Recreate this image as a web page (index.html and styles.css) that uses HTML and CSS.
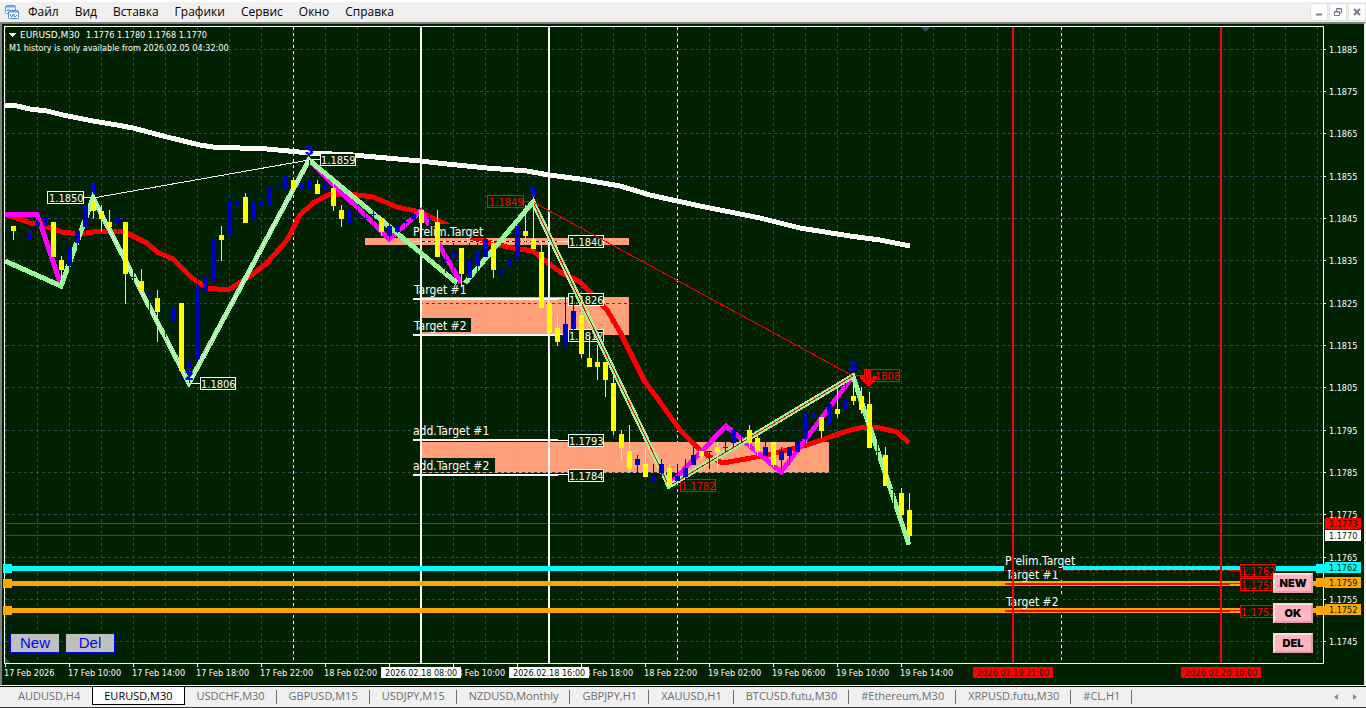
FILE: index.html
```html
<!DOCTYPE html>
<html lang="ru">
<head>
<meta charset="utf-8">
<title>EURUSD,M30</title>
<link rel="stylesheet" href="styles.css">
</head>
<body>
<header class="menubar">
  <svg class="app-icon" viewBox="0 0 14 14" aria-hidden="true">
    <rect x="0.5" y="0.5" width="10" height="8" rx="1" fill="#eaf4ff" stroke="#6ba4e0"/>
    <path d="M1 1.500H10" stroke="#6ba4e0" stroke-width="2"/>
    <path d="M2 6L3.500 4L5 6" fill="none" stroke="#4b8fd8"/>
    <rect x="3.500" y="5.500" width="10" height="8" rx="1" fill="#fff" stroke="#4b8fd8"/>
    <path d="M4 6.500H13" stroke="#6ba4e0" stroke-width="2"/>
    <path d="M5 9L6.500 12L8.500 9L10 12L12 10" fill="none" stroke="#2f78cc"/>
  </svg>
  <nav class="menu">
    <button type="button">Файл</button>
    <button type="button">Вид</button>
    <button type="button">Вставка</button>
    <button type="button">Графики</button>
    <button type="button">Сервис</button>
    <button type="button">Окно</button>
    <button type="button">Справка</button>
  </nav>
  <div class="window-controls">
    <button type="button" aria-label="Свернуть"><svg viewBox="0 0 10 10"><path d="M2 7.500H8" stroke-width="2"/></svg></button>
    <button type="button" aria-label="Восстановить"><svg viewBox="0 0 10 10"><path d="M3.500 4V1.500H8.500V6H7M3 2H9M1.500 4.500H6.500V8.500H1.500ZM1 5H7"/></svg></button>
    <button type="button" aria-label="Закрыть"><svg viewBox="0 0 10 10"><path d="M2 2L8 8M8 2L2 8" stroke-width="2"/></svg></button>
  </div>
</header>

<main class="workspace">
<svg class="chart" viewBox="2 24 1362 661" role="img" aria-label="EURUSD,M30">
  <defs>
    <pattern id="vgrid" x="37" y="27" width="32" height="6" patternUnits="userSpaceOnUse"><rect width="1" height="3" fill="#2f4f4f"/></pattern>
    <pattern id="vgrid-zone" x="37" y="27" width="32" height="6" patternUnits="userSpaceOnUse"><rect width="1" height="3" fill="#d0b050"/></pattern>
  </defs>
  <rect x="5" y="27" width="1318" height="636" fill="url(#vgrid)"/>
  <path class="day" d="M293.500 27V663M677.500 27V663M1061.500 27V663"/>

  <g class="zones">
    <rect x="365" y="238" width="264" height="7"/>
    <rect x="422" y="297" width="207" height="38"/>
    <rect x="422" y="442" width="407" height="31"/>
  </g>
  <g fill="url(#vgrid-zone)">
    <rect x="422" y="297" width="207" height="38"/>
    <rect x="422" y="442" width="407" height="31"/>
  </g>
  <path class="hgrid" d="M6 49.500H1323M6 91.500H1323M6 133.500H1323M6 176.500H1323M6 218.500H1323M6 260.500H1323M6 303.500H1323M6 345.500H1323M6 387.500H1323M6 430.500H1323M6 472.500H1323M6 514.500H1323M6 557.500H1323M6 599.500H1323M6 641.500H1323"/>
  <path class="line1 slate" d="M5 535.500H1323"/>
  <path class="line1 red" d="M5 523.500H1323"/>
  <path fill="#2f4f4f" d="M920 27H931L925.500 32ZM5 658V663H10Z"/>

  <path class="ma white" d="M5 105L17 106L30 109L47 111L63 115L93 121L117 125L133 128L167 137L200 145L213 147L267 149L310 153L353 155L420 161L447 164L487 168L527 171L549 175L580 179L620 186L650 195L700 206L760 218L800 228L850 236L880 240L910 246"/>
  <path class="ma red" d="M5 214L30 223L37 223L45 226L62 232L80 234L100 231L117 231L127 233L147 243L157 252L173 259L192 278L207 288L217 289L230 289L253 274L267 263L287 240L300 215L313 203L328 195L350 194L373 197L397 207L420 212L430 217L443 223L473 238L507 247L533 251L547 262L560 272L580 282L607 310L620 332L633 358L645 382L660 402L680 430L700 450L710 457L723 463L740 460L767 455L807 445L827 438L847 431L863 427L880 428L897 432L909 443"/>

  <path class="line2 white" d="M549 27V663"/>
  <path class="level cyan" d="M5 568.500H1323"/>
  <path class="level orange" d="M5 583.500H1323M5 610.500H1323"/>
  <g class="cyan-fill"><rect x="1316" y="564" width="10" height="9"/></g>
  <g class="orange-fill"><rect x="1316" y="578" width="10" height="9"/><rect x="1316" y="606" width="10" height="9"/></g>

  <g class="bg">
    <rect x="413" y="224" width="73" height="14"/><rect x="414" y="283" width="57" height="14"/>
    <rect x="414" y="318" width="57" height="14"/><rect x="413" y="424" width="82" height="14"/>
    <rect x="413" y="458" width="82" height="14"/>
    <rect x="1005" y="553" width="74" height="13"/><rect x="1004" y="566" width="59" height="14"/>
    <rect x="1006" y="594" width="57" height="14"/>
    <rect x="1063" y="570" width="177" height="1"/>
  </g>
  <g class="note">
    <text x="413" y="236">Prelim.Target</text><text x="414" y="294">Target #1</text><text x="414" y="330">Target #2</text>
    <text x="413" y="435">add.Target #1</text><text x="413" y="470">add.Target #2</text>
    <text x="1005" y="565">Prelim.Target</text><text x="1006" y="579">Target #1</text><text x="1006" y="606">Target #2</text>
  </g>
  <path class="line1 white" d="M413 241.500H568M558 298.500H568M558 334.500H568M558 440.500H568M558 474.500H568"/>
  <path class="line1 ink dash" d="M422 241.500H560"/>
  <path class="line2 white" d="M413 299H558M413 335H558M413 440H558M413 475H558M421 27V566M421 571V581M421 586V608M421 613V663"/>
  <path class="line1 red dash" d="M1005 570.500H1230"/>
  <path class="line1 red" d="M1230 570.500H1240M1230 583.500H1240M1230 610.500H1240"/>
  <path class="line2 red" d="M1005 584H1230M1005 611H1230M1013 27V663M1221 27V663"/>

  <g class="tag">
    <rect x="47.500" y="191.500" width="36" height="12"/><text x="49" y="202">1.1850</text>
    <rect x="320.500" y="153.500" width="35" height="12"/><text x="321" y="164">1.1859</text>
    <rect x="200.500" y="377.500" width="35" height="12"/><text x="201" y="388">1.1806</text>
    <rect x="568.500" y="235.500" width="35" height="12"/><text x="569" y="246">1.1840</text>
    <rect x="568.500" y="293.500" width="35" height="12"/><text x="569" y="304">1.1826</text>
    <rect x="568.500" y="329.500" width="35" height="12"/><text x="569" y="340">1.1817</text>
    <rect x="568.500" y="434.500" width="35" height="12"/><text x="569" y="445">1.1793</text>
    <rect x="568.500" y="469.500" width="35" height="12"/><text x="569" y="480">1.1784</text>
  </g>
  <g class="tag tag-red">
    <rect x="487.500" y="195.500" width="36" height="12"/><text x="489" y="206">1.1849</text>
    <rect x="680.500" y="479.500" width="35" height="12"/><text x="681" y="490">1.1782</text>
    <rect x="864.500" y="369.500" width="35" height="12"/><text x="875" y="380">1808</text>
    <rect x="1240.500" y="564.500" width="35" height="12"/><text x="1241" y="575">1.1762</text>
    <rect x="1240.500" y="578.500" width="35" height="12"/><text x="1241" y="589">1.1758</text>
    <rect x="1240.500" y="605.500" width="35" height="12"/><text x="1241" y="616">1.1752</text>
  </g>
  <path class="line1 white" d="M84 197.500H93M190 383.500H200M310 159.500H320"/>
  <path class="line1 red" d="M524 201.500H533M670 485.500H680M854 375.500H864"/>

  <path class="zig magenta" d="M5 214H37L61 285M309 160L389 239L421 211L429 225M438 243L461 283M672 482L726 426L781 472L853 376"/>
  <path class="zig green" d="M5 261L61 286L93 198L189 383L309 160L457 283M465 283L533 202L669 486L853 376L909 545"/>
  <path class="line1 white" d="M93 198L189 383L309 160L93 198"/>
  <path class="line1 red" d="M533 202L669 486L853 376L533 202"/>

  <path class="wick blue" d="M5.500 227V243M21.500 231V253M29.500 225V243M37.500 217V227M45.500 213V227M69.500 243V278M77.500 218V257M85.500 205V236M117.500 217V233M133.500 256V290M149.500 277V321M165.500 293V337M173.500 287V324M189.500 353V383M197.500 277V360M205.500 256V291M229.500 201V239M237.500 180V215M253.500 201V222M261.500 193V211M269.500 184V206M277.500 180V191M285.500 176V191M301.500 180V193M309.500 160V189M325.500 180V193M357.500 206V233M365.500 210V232M373.500 210V227M389.500 218V240M397.500 218V233M405.500 214V236M413.500 210V227M429.500 210V227M445.500 247V273M453.500 243V273M469.500 243V278M477.500 243V287M485.500 235V257M501.500 260V277M509.500 248V269M517.500 226V265M565.500 294V349M573.500 298V337M637.500 455V477M653.500 464V481M661.500 459V477M677.500 464V481M685.500 459V481M693.500 447V465M709.500 451V469M725.500 425V452M733.500 426V447M741.500 425V442M765.500 442V456M781.500 447V472M789.500 447V465M797.500 438V452M805.500 410V448M813.500 405V422M829.500 393V427M845.500 383V417M877.500 430V459M893.500 480V507"/>
  <path class="body blue" d="M5.500 231V232M21.500 235V236M29.500 231V239M37.500 222V226M45.500 218V226M69.500 248V266M77.500 231V243M85.500 205V227M117.500 218V223M133.500 277V278M149.500 294V295M165.500 315V316M173.500 307V321M189.500 362V367M197.500 285V359M205.500 277V291M213.500 239V282M229.500 201V236M237.500 201V206M253.500 201V219M261.500 201V206M269.500 188V206M277.500 184V185M285.500 176V189M301.500 184V189M309.500 180V189M325.500 184V189M349.500 210V223M357.500 214V215M365.500 218V219M373.500 214V215M389.500 226V236M397.500 226V232M405.500 222V223M413.500 214V219M429.500 218V219M445.500 260V261M453.500 252V257M469.500 260V278M477.500 252V266M485.500 239V257M501.500 269V274M509.500 260V266M517.500 226V257M565.500 324V346M573.500 311V329M637.500 459V465M653.500 476V481M661.500 464V473M677.500 476V481M685.500 468V477M693.500 455V465M709.500 451V452M725.500 447V448M733.500 430V443M741.500 434V435M765.500 447V456M781.500 451V460M789.500 447V456M797.500 442V452M805.500 413V439M813.500 413V418M829.500 404V426M845.500 400V410M877.500 451V452M893.500 489V490"/>
  <path class="wick yellow" d="M13.500 226V240M61.500 256V286M93.500 199V219M101.500 205V232M109.500 210V228M125.500 222V304M141.500 269V291M157.500 290V342M221.500 226V261M245.500 193V223M317.500 180V194M333.500 180V211M341.500 205V227M381.500 218V236M421.500 209V223M437.500 210V257M461.500 248V287M493.500 239V278M525.500 205V244M533.500 202V249M541.500 243V308M549.500 290V354M557.500 315V346M581.500 298V358M589.500 337V367M597.500 345V380M605.500 362V397M613.500 375V435M621.500 430V460M629.500 425V473M645.500 447V477M669.500 464V486M701.500 451V460M717.500 442V469M749.500 425V448M757.500 434V456M773.500 442V467M821.500 417V438M837.500 387V418M853.500 376V405M861.500 387V414M869.500 392V448M885.500 447V486M901.500 488V517M909.500 493V543"/>
  <path class="body yellow" d="M13.500 226V231M53.500 222V257M61.500 260V270M93.500 201V211M101.500 211V219M109.500 222V227M125.500 222V274M141.500 281V291M157.500 298V312M181.500 303V371M221.500 235V240M245.500 197V223M293.500 180V189M317.500 184V194M333.500 188V206M341.500 210V219M381.500 218V232M421.500 210V223M437.500 222V257M461.500 248V274M493.500 243V270M525.500 231V236M533.500 239V249M541.500 252V308M549.500 303V333M557.500 328V342M581.500 315V354M589.500 358V367M597.500 362V367M605.500 362V380M613.500 383V431M621.500 434V448M629.500 451V469M645.500 464V477M669.500 468V486M701.500 451V456M717.500 447V452M749.500 430V443M757.500 438V452M773.500 442V465M821.500 417V431M837.500 409V414M853.500 396V401M861.500 396V410M869.500 404V448M885.500 455V486M901.500 493V515M909.500 510V536"/>
  <path fill="#f00" d="M866 370H871V378L874 376H877V379L868.500 387L860 379V376H863L866 378Z"/>
  <g class="wave">
    <text x="93" y="193">1</text><text x="189" y="380">2</text><text x="309" y="155">3</text><text x="533" y="197">1</text><text x="853" y="371">3</text>
  </g>

  <rect class="frame" x="4.500" y="26.500" width="1319" height="637"/>
  <path class="line1 white" d="M1324 49.500H1326M1324 91.500H1326M1324 133.500H1326M1324 176.500H1326M1324 218.500H1326M1324 260.500H1326M1324 303.500H1326M1324 345.500H1326M1324 387.500H1326M1324 430.500H1326M1324 472.500H1326M1324 514.500H1326M1324 557.500H1326M1324 599.500H1326M1324 641.500H1326"/>
  <path class="line1 white" d="M5.500 664V667M69.500 664V667M133.500 664V667M197.500 664V667M261.500 664V667M325.500 664V667M389.500 664V667M453.500 664V667M517.500 664V667M581.500 664V667M645.500 664V667M709.500 664V667M773.500 664V667M837.500 664V667M901.500 664V667"/>
  <g class="cyan-fill"><rect x="3" y="564" width="9" height="9"/><rect x="1316" y="564" width="10" height="9"/></g>
  <g class="orange-fill"><rect x="3" y="579" width="9" height="9"/><rect x="3" y="606" width="9" height="9"/><rect x="1316" y="578" width="10" height="9"/><rect x="1316" y="606" width="10" height="9"/></g>

  <path fill="#fff" d="M8 33H16L12 37Z"/>
  <g class="axis">
    <text class="symbol" x="20" y="38">EURUSD,M30</text>
    <text x="86" y="38">1.1776 1.1780 1.1768 1.1770</text>
    <text x="9" y="51">M1 history is only available from 2026.02.05 04:32:00</text>
    <text x="1329" y="53">1.1885</text><text x="1329" y="95">1.1875</text><text x="1329" y="137">1.1865</text><text x="1329" y="180">1.1855</text>
    <text x="1329" y="222">1.1845</text><text x="1329" y="264">1.1835</text><text x="1329" y="307">1.1825</text><text x="1329" y="349">1.1815</text>
    <text x="1329" y="391">1.1805</text><text x="1329" y="434">1.1795</text><text x="1329" y="476">1.1785</text><text x="1329" y="518">1.1775</text>
    <text x="1329" y="561">1.1765</text><text x="1329" y="603">1.1755</text><text x="1329" y="645">1.1745</text>
    <text x="4" y="676">17 Feb 2026</text><text x="68" y="676">17 Feb 10:00</text><text x="132" y="676">17 Feb 14:00</text><text x="196" y="676">17 Feb 18:00</text>
    <text x="260" y="676">17 Feb 22:00</text><text x="324" y="676">18 Feb 02:00</text><text x="452" y="676">18 Feb 10:00</text><text x="580" y="676">18 Feb 18:00</text>
    <text x="644" y="676">18 Feb 22:00</text><text x="708" y="676">19 Feb 02:00</text><text x="772" y="676">19 Feb 06:00</text><text x="836" y="676">19 Feb 10:00</text>
    <text x="900" y="676">19 Feb 14:00</text>
  </g>
  <g fill="#fff"><rect x="381" y="667" width="80" height="11"/><rect x="509" y="667" width="80" height="11"/><rect x="1325" y="530" width="36" height="11"/></g>
  <g fill="#f00"><rect x="973" y="667" width="80" height="11"/><rect x="1181" y="667" width="80" height="11"/><rect x="1325" y="518" width="36" height="11"/></g>
  <rect class="cyan-fill" x="1325" y="562" width="36" height="11"/>
  <g class="orange-fill"><rect x="1325" y="577" width="36" height="11"/><rect x="1325" y="604" width="36" height="11"/></g>
  <g class="axis axis-dark">
    <text x="385" y="676">2026.02.18 08:00</text><text x="513" y="676">2026.02.18 16:00</text>
    <text x="977" y="676">2026.02.19 21:00</text><text x="1185" y="676">2026.02.20 10:00</text>
    <text x="1329" y="527">1.1773</text><text x="1329" y="539">1.1770</text><text x="1329" y="571">1.1762</text><text x="1329" y="586">1.1759</text><text x="1329" y="613">1.1752</text>
  </g>
</svg>
<div class="draw-buttons">
  <button type="button">New</button>
  <button type="button">Del</button>
</div>
<div class="order-buttons">
  <button type="button">NEW</button>
  <button type="button">OK</button>
  <button type="button">DEL</button>
</div>
</main>

<footer class="tabbar">
  <nav class="tabs">
    <button type="button" class="tab">AUDUSD,H4</button>
    <button type="button" class="tab active">EURUSD,M30</button>
    <button type="button" class="tab">USDCHF,M30</button>
    <button type="button" class="tab">GBPUSD,M15</button>
    <button type="button" class="tab">USDJPY,M15</button>
    <button type="button" class="tab">NZDUSD,Monthly</button>
    <button type="button" class="tab">GBPJPY,H1</button>
    <button type="button" class="tab">XAUUSD,H1</button>
    <button type="button" class="tab">BTCUSD.futu,M30</button>
    <button type="button" class="tab">#Ethereum,M30</button>
    <button type="button" class="tab">XRPUSD.futu,M30</button>
    <button type="button" class="tab">#CL,H1</button>
  </nav>
  <div class="tab-scroll">
    <button type="button" aria-label="Назад"><svg viewBox="0 0 4 6"><path d="M4 0V6L0 3Z"/></svg></button>
    <button type="button" aria-label="Вперёд"><svg viewBox="0 0 4 6"><path d="M0 0V6L4 3Z"/></svg></button>
  </div>
</footer>
</body>
</html>
```
FILE: styles.css
```css
* { box-sizing: border-box; }
body { margin: 0; background: #f0f0f0; color: #000; font-family: "Open Sans", "Noto Sans", sans-serif; font-size: 12px; }
button { margin: 0; padding: 0; border: 0; background: none; color: inherit; font: inherit; }

.menubar { display: flex; align-items: center; height: 22px; border-top: 2px solid #fff; padding-left: 5px; }
.app-icon { width: 14px; height: 14px; margin-right: 9px; }
.menu { display: flex; gap: 16px; flex: 1; line-height: 20px; }
.window-controls { display: flex; gap: 1px; }
.window-controls button { display: flex; align-items: center; justify-content: center; width: 18px; height: 18px; background: #fff; border: 1px solid #e3e3e3; }
.window-controls svg { width: 10px; height: 10px; fill: none; stroke: #6f7f90; }

.workspace { position: relative; background: #002200; border: solid #696969; border-width: 2px 2px 0; border-top-color: #808080; border-right-color: #f0f0f0; border-left-color: #808080; }
.chart { display: block; width: 100%; height: auto; background: #002200; font-family: "DejaVu Sans Condensed", "DejaVu Sans", sans-serif; }
.chart path, .chart rect { shape-rendering: crispEdges; }
.day { stroke: #fff; stroke-dasharray: 3 3; }
.hgrid { stroke: #2f4f4f; stroke-dasharray: 3 3; }
.zones { fill: #ffa07a; }
.bg { fill: #002200; }
.line1, .line2, .ma, .zig { fill: none; }
.line1 { stroke-width: 1px; }
.line2 { stroke-width: 2px; }
.ma { stroke-width: 5px; stroke-linejoin: round; }
.zig { stroke-width: 5px; }
.level { stroke-width: 5px; }
.dash { stroke-dasharray: 3 3; }
.wick { stroke-width: 1px; }
.body { stroke-width: 5px; }
.white { stroke: #fff; }
.red { stroke: #f00; }
.slate { stroke: #2f4f4f; }
.ink { stroke: #002200; }
.cyan { stroke: #0ff; }
.orange { stroke: #ffa500; }
.magenta { stroke: #f0f; }
.green { stroke: #98fb98; }
.blue { stroke: #0000cd; }
.yellow { stroke: #ff0; }
.cyan-fill { fill: #0ff; }
.orange-fill { fill: #ffa500; }
.frame { fill: none; stroke: #fff; }
.note { fill: #fff; font-size: 12px; }
.tag { fill: #fff; font-size: 11px; }
.tag rect { fill: #002200; stroke: #fff; }
.tag-red { fill: #f00; }
.tag-red rect { stroke: #f00; }
.wave { fill: #00f; font-family: Inter, "Liberation Sans", sans-serif; font-size: 13px; font-weight: 900; text-anchor: middle; }
.axis { fill: #fff; font-size: 9px; }
.axis-dark { fill: #002200; }
.symbol { font-family: "DejaVu Sans", sans-serif; }

.draw-buttons { position: absolute; left: 8px; bottom: 32px; display: flex; gap: 5px; }
.draw-buttons button { width: 50px; height: 20px; background: #c0c0c0; border: 1px solid #00f; color: #00f; font: 15px/18px "Liberation Sans", Arial, sans-serif; }
.order-buttons { position: absolute; right: 51px; bottom: 32px; display: flex; flex-direction: column; gap: 10px; }
.order-buttons button { width: 40px; height: 20px; background: #ffb6c1; border: 2px solid; border-color: #ffdbe0 #dea0a9 #dea0a9 #ffdbe0; font: 900 11px/16px Inter, "Liberation Sans", sans-serif; }

.tabbar { display: flex; justify-content: space-between; height: 23px; border-top: 1px solid #fff; border-bottom: 1px solid #303030; }
.tabs { display: flex; flex: 1; border-top: 1px solid #000; padding-left: 6px; font-size: 11px; }
.tab { position: relative; height: 18px; padding: 0 12px; line-height: 18px; color: #6d6d6d; white-space: nowrap; }
.tab:not(.active)::after { content: ""; position: absolute; right: 0; top: 3px; height: 14px; border-right: 1px solid #6d6d6d; }
.tab:first-child::after { display: none; }
.tab.active { background: #fff; border: solid #000; border-width: 0 1px 1px; color: #000; padding: 0 11px; }
.tab-scroll { display: flex; gap: 15px; align-items: center; padding-right: 9px; border-top: 1px solid #000; }
.tab-scroll button { display: flex; }
.tab-scroll svg { width: 4px; height: 6px; fill: #8a8a8a; }
```
